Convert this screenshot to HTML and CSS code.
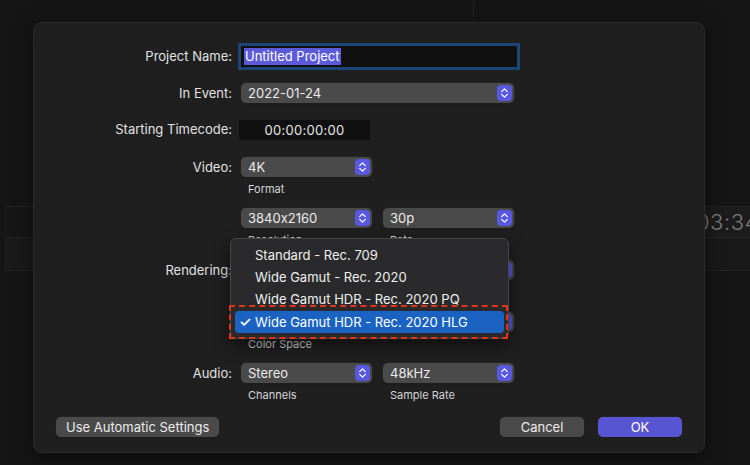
FILE: index.html
```html
<!DOCTYPE html>
<html lang="en">

<head>
  <meta charset="UTF-8" />
  <title>New Project</title>
  <link rel="stylesheet" href="styles.css">
</head>

<body>

  <div class="app">
    <!-- app behind the sheet -->
    <div class="bg-top-line"></div>
    <div class="bg-left">
      <div class="bg-band b1"></div>
      <div class="bg-band b2"></div>
    </div>
    <div class="bg-right">
      <div class="bg-band b1"><span class="clock">03:34</span></div>
      <div class="bg-band b2"></div>
    </div>

    <div class="dialog">
      <div class="row">
        <label>Project Name:</label>
        <div class="field name"><span class="selected">Untitled Project</span></div>
      </div>

      <div class="row gap16">
        <label>In Event:</label>
        <div class="popup wide">2022-01-24<span class="stepper"></span></div>
      </div>

      <div class="row gap16">
        <label>Starting Timecode:</label>
        <div class="field timecode">00:00:00:00</div>
      </div>

      <div class="row gap16">
        <label>Video:</label>
        <div class="controls">
          <div class="item">
            <div class="popup">4K<span class="stepper"></span></div>
            <div class="caption">Format</div>
          </div>
          <div class="pair">
            <div class="item">
              <div class="popup">3840x2160<span class="stepper"></span></div>
              <div class="caption">Resolution</div>
            </div>
            <div class="item">
              <div class="popup">30p<span class="stepper"></span></div>
              <div class="caption">Rate</div>
            </div>
          </div>
        </div>
      </div>

      <div class="row gap13">
        <label>Rendering:</label>
        <div class="controls">
          <div class="item">
            <div class="popup wide">Apple ProRes 422<span class="stepper"></span></div>
            <div class="caption">Codec</div>
          </div>
          <div class="item color-space">
            <div class="popup wide">Wide Gamut HDR - Rec. 2020 HLG<span class="stepper"></span></div>
            <div class="caption">Color Space</div>

            <div class="menu">
              <div class="menu-item">Standard - Rec. 709</div>
              <div class="menu-item">Wide Gamut - Rec. 2020</div>
              <div class="menu-item">Wide Gamut HDR - Rec. 2020 PQ</div>
              <div class="menu-item active"><span class="check">✓</span>Wide Gamut HDR - Rec. 2020 HLG</div>
              <div class="callout"></div>
            </div>
          </div>
        </div>
      </div>

      <div class="row gap12">
        <label>Audio:</label>
        <div class="pair">
          <div class="item">
            <div class="popup">Stereo<span class="stepper"></span></div>
            <div class="caption">Channels</div>
          </div>
          <div class="item">
            <div class="popup">48kHz<span class="stepper"></span></div>
            <div class="caption">Sample Rate</div>
          </div>
        </div>
      </div>

      <div class="footer">
        <button class="btn">Use Automatic Settings</button>
        <div class="actions">
          <button class="btn cancel">Cancel</button>
          <button class="btn primary">OK</button>
        </div>
      </div>
    </div>
  </div>

</body>

</html>
```

FILE: styles.css
```css
body {
  margin: 0;
  background: #151515;
  font-family: Inter, "Liberation Sans", sans-serif;
  font-size: 13px;
  font-feature-settings: "calt" 0;
  color: #e6e6e6;
}

.app {
  position: relative;
  width: 750px;
  height: 465px;
  overflow: hidden;
  background: #151515;
}

/* background app */
.bg-top-line {
  position: absolute;
  left: 473px;
  top: 0;
  width: 1px;
  height: 22px;
  background: #222;
}

.bg-left,
.bg-right {
  position: absolute;
  top: 206px;
  display: flex;
  flex-direction: column;
}

.bg-left {
  left: 0;
  width: 33px;
  border-left: 1px solid #1c1c1c;
  margin-left: 5px;
}

.bg-right {
  left: 705px;
  width: 45px;
}

.bg-band {
  border-top: 1px solid #242424;
}

.bg-band.b1 {
  height: 30px;
  background: #161616;
}

.bg-band.b2 {
  height: 32px;
  background: #191919;
  border-bottom: 1px solid #242424;
}

.bg-right .b1 {
  background: #1c1c1c;
}

.bg-right .b2 {
  background: #191919;
}

.clock {
  display: block;
  margin-left: -9px;
  font-size: 22px;
  font-weight: 300;
  line-height: 30px;
  color: #7c7c7c;
  letter-spacing: 0.5px;
}

/* sheet */
.dialog {
  position: absolute;
  left: 33px;
  top: 22px;
  box-sizing: border-box;
  width: 672px;
  height: 431px;
  padding: 23px 22px 0 22px;
  background: #1f1f1f;
  border: 1px solid #2a2a2a;
  border-radius: 9px;
  box-shadow: 0 4px 18px rgba(0, 0, 0, 0.5);
}

.row {
  display: flex;
  align-items: flex-start;
}

.row label {
  flex: none;
  width: 176px;
  margin-right: 9px;
  text-align: right;
  line-height: 20px;
  color: #e2e2e2;
}

.row:first-child label {
  line-height: 21px;
}

.gap16 {
  margin-top: 16px;
}

.gap13 {
  margin-top: 13px;
}

.gap12 {
  margin-top: 12px;
}

.field {
  height: 21px;
  line-height: 21px;
  background: #101010;
}

.field.name {
  width: 273px;
  padding-left: 3px;
  box-shadow: 0 0 0 3px #1c4677;
}

.selected {
  display: inline-block;
  line-height: 17px;
  padding: 0 1px;
  background: #5b5bd9;
  color: #fff;
}

.field.timecode {
  width: 131px;
  height: 20px;
  margin-left: -3px;
  text-align: center;
  line-height: 20px;
  border: 1px solid #202020;
  letter-spacing: 0.3px;
}

.controls {
  display: flex;
  flex-direction: column;
}

.controls .pair {
  margin-top: 12px;
}

.controls .item + .item {
  margin-top: 13px;
}

.pair {
  display: flex;
  gap: 11px;
}

.pair .item + .item {
  margin-top: 0;
}

.item {
  position: relative;
}

.popup {
  position: relative;
  width: 124px;
  height: 20px;
  padding-left: 7px;
  line-height: 20px;
  background: #4a4a4a;
  border-radius: 5px;
  box-shadow: 0 0 0 0.5px #2a2a2a, 0 1px 1px rgba(0, 0, 0, 0.4);
  color: #ececec;
}

.popup.wide {
  width: 266px;
}

.stepper {
  position: absolute;
  right: 2px;
  top: 2px;
  width: 15px;
  height: 16px;
  border-radius: 4px;
  background: #5858e0 url("data:image/svg+xml,%3Csvg xmlns='http://www.w3.org/2000/svg' width='15' height='16'%3E%3Cpath d='M4.7 6.6 L7.5 3.9 L10.3 6.6 M4.7 9.4 L7.5 12.1 L10.3 9.4' fill='none' stroke='white' stroke-width='1.3' stroke-linecap='round' stroke-linejoin='round'/%3E%3C/svg%3E") no-repeat center;
}

.caption {
  margin-top: 5px;
  padding-left: 7px;
  font-size: 11px;
  line-height: 14px;
  color: #d6d6d6;
}

/* open pop-up menu */
.menu {
  position: absolute;
  left: -11px;
  top: -74px;
  width: 269px;
  padding: 5px 4px;
  background: #2a2a2c;
  border: 1px solid #474749;
  border-radius: 6px;
  box-shadow: 0 6px 16px rgba(0, 0, 0, 0.55);
}

.menu-item {
  position: relative;
  height: 22px;
  padding-left: 20px;
  line-height: 22px;
  color: #f0f0f0;
  white-space: nowrap;
}

.menu-item.active {
  margin-top: 1px;
  background: #1a63c2;
  border-radius: 4px;
  color: #fff;
}

.check {
  position: absolute;
  left: 4px;
  font-size: 14px;
  font-weight: 600;
}

.callout {
  position: absolute;
  left: -2px;
  top: 66px;
  width: 275px;
  height: 30px;
  border: 2px dashed #e2341a;
}

/* footer */
.footer {
  display: flex;
  justify-content: space-between;
  margin-top: 15px;
}

.actions {
  display: flex;
  gap: 14px;
}

.btn {
  height: 20px;
  padding: 0 10px;
  font-family: inherit;
  font-size: 13px;
  font-feature-settings: "calt" 0;
  line-height: 20px;
  color: #ececec;
  background: #4a4a4a;
  border: none;
  border-radius: 5px;
  box-shadow: 0 0 0 0.5px #2a2a2a, 0 1px 1px rgba(0, 0, 0, 0.4);
}

.btn.cancel,
.btn.primary {
  width: 84px;
}

.btn.primary {
  background: #5855d2;
  color: #fff;
}
```
